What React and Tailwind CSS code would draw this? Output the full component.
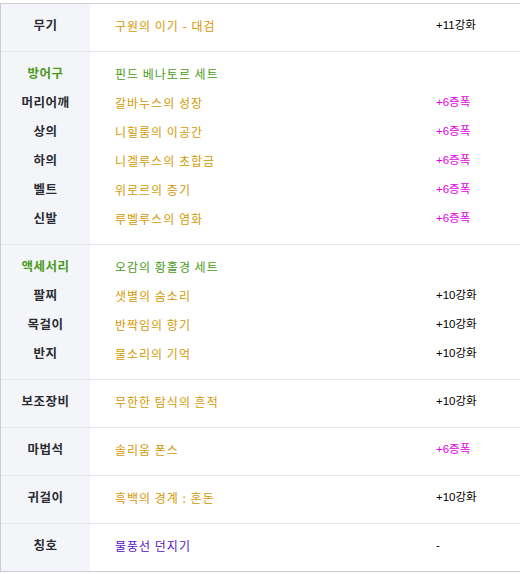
const groups = [
    {
        rows: [
            { label: '무기', name: '구원의 이기 - 대검', value: '+11강화' },
        ],
    },
    {
        rows: [
            { label: '방어구', name: '핀드 베나토르 세트', set: true },
            { label: '머리어깨', name: '갈바누스의 성장', value: '+6증폭', amp: true },
            { label: '상의', name: '니힐룸의 이공간', value: '+6증폭', amp: true },
            { label: '하의', name: '니겔루스의 초합금', value: '+6증폭', amp: true },
            { label: '벨트', name: '위로르의 증기', value: '+6증폭', amp: true },
            { label: '신발', name: '루벨루스의 염화', value: '+6증폭', amp: true },
        ],
    },
    {
        rows: [
            { label: '액세서리', name: '오감의 황홀경 세트', set: true },
            { label: '팔찌', name: '샛별의 숨소리', value: '+10강화' },
            { label: '목걸이', name: '반짝임의 향기', value: '+10강화' },
            { label: '반지', name: '물소리의 기억', value: '+10강화' },
        ],
    },
    {
        rows: [
            { label: '보조장비', name: '무한한 탐식의 흔적', value: '+10강화' },
        ],
    },
    {
        rows: [
            { label: '마법석', name: '솔리움 폰스', value: '+6증폭', amp: true },
        ],
    },
    {
        rows: [
            { label: '귀걸이', name: '흑백의 경계 : 혼돈', value: '+10강화' },
        ],
    },
    {
        rows: [
            { label: '칭호', name: '물풍선 던지기', value: '-', title: true },
        ],
    },
];

export default function App() {
    return (
        <div className="w-[520px] h-[574px] bg-white pt-[3px] font-['Noto_Sans_CJK_KR',sans-serif]">
            <div className="border-t border-[#d0d0d4] border-l border-l-[#c9cbd5] border-b border-b-[#c9cad2]">
                {groups.map((group, gi) => (
                    <div
                        key={gi}
                        className={`flex ${gi < groups.length - 1 ? 'border-b border-[#e6e7ea]' : ''}`}
                    >
                        <div className="w-[89px] shrink-0 bg-[#f4f5f9] pt-[7px] pb-[11px]">
                            {group.rows.map(row => (
                                <div
                                    key={row.label}
                                    className={`h-[29px] flex items-center justify-center text-[12.5px] font-bold tracking-[0.5px]
                                        ${row.set ? 'text-[#4a9a1c]' : 'text-[#2b2c33]'}`}
                                >
                                    {row.label}
                                </div>
                            ))}
                        </div>
                        <div className="flex-1 pt-[7px] pb-[11px]">
                            {group.rows.map(row => (
                                <div key={row.label} className="h-[29px] flex items-center">
                                    <div
                                        className={`w-[346px] pl-[25px] text-[12px] tracking-[1px]
                                            ${row.set ? 'text-[#4a9a1c]' : row.title ? 'text-[#5510c8]' : 'text-[#d49a06]'}`}
                                    >
                                        {row.name}
                                    </div>
                                    {row.value && (
                                        <div
                                            className={`text-[11.5px] font-['Liberation_Sans','Noto_Sans_CJK_KR',sans-serif]
                                                ${row.amp ? 'text-[#e100e6]' : 'text-black'}`}
                                        >
                                            {row.value}
                                        </div>
                                    )}
                                </div>
                            ))}
                        </div>
                    </div>
                ))}
            </div>
        </div>
    );
}
